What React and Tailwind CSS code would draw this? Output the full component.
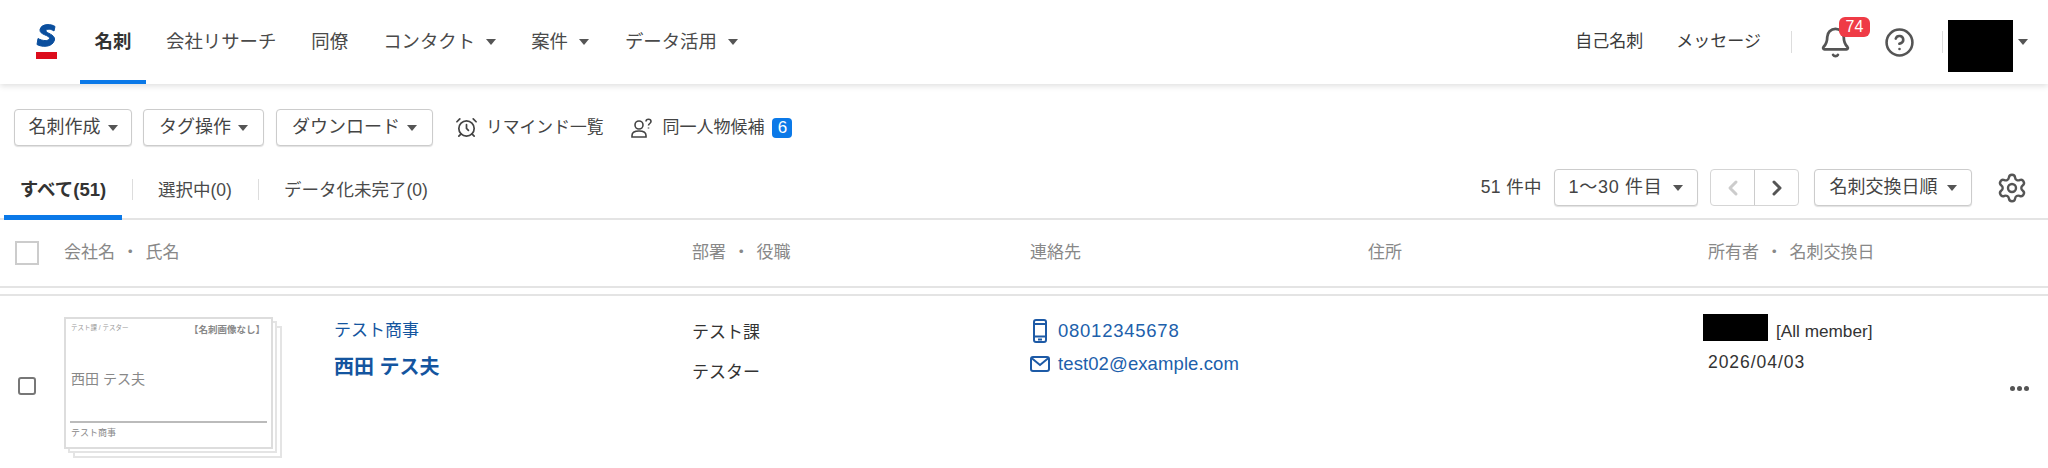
import React from "react";
import { AlarmClock, Bell, ChevronLeft, ChevronRight, CircleHelp, Settings } from "lucide-react";

const Caret = ({ className = "" }) => (
  <span className={`inline-block w-0 h-0 border-l-[5px] border-r-[5px] border-t-[6px] border-l-transparent border-r-transparent border-t-[#555] ${className}`} />
);

const Btn = ({ w, children, gap = "gap-[7px]", text = "text-[18px]" }) => (
  <div className={`h-[37px] ${w} border border-[#ccc] rounded-[4px] shadow-[0_1px_1px_rgba(0,0,0,0.12)] flex items-center justify-center ${gap} ${text} text-[#444] bg-white`}>
    <span>{children}</span>
    <Caret />
  </div>
);

const NavItem = ({ children, ml, caret }) => (
  <div className={`flex items-center ${ml}`}>
    <span>{children}</span>
    {caret && <Caret className="ml-[11px]" />}
  </div>
);

export default function App() {
  return (
    <div className="w-[2048px] h-[468px] overflow-hidden bg-white text-[#333] font-['Liberation_Sans','Noto_Sans_CJK_JP',sans-serif] text-[17.5px]">
      {/* header */}
      <header className="h-[84px] flex items-center shadow-[0_2px_6px_rgba(0,0,0,0.13)] relative">
        <svg width="22" height="38" viewBox="0 0 22 38" className="ml-[36px] shrink-0 -mt-[1px]">
          <path d="M19 3.5C16 1 5.5 0 4 6.5C3 12 14 12 13.5 15.5C13 18.5 6 18 2 15.5L1 21.5C5 24 16.5 25 18.5 17C19.5 11 9.5 10.5 10 7.5C10.5 5.5 15.5 6 18 8Z" fill="#0b4f9e" stroke="#0b4f9e" strokeWidth="1" />
          <rect x="0" y="29" width="21" height="7" fill="#dc0d1c" />
        </svg>
        <nav className="flex items-center text-[18.4px] text-[#4a4a4a] h-full">
          <div className="relative ml-[22px] w-[66px] h-full flex items-center justify-center font-bold text-[#333]">
            名刺
            <span className="absolute left-0 right-0 bottom-0 h-[4px] bg-[#0b79e8]" />
          </div>
          <NavItem ml="ml-[20px]">会社リサーチ</NavItem>
          <NavItem ml="ml-[35px]">同僚</NavItem>
          <NavItem ml="ml-[35px]" caret>コンタクト</NavItem>
          <NavItem ml="ml-[35px]" caret>案件</NavItem>
          <NavItem ml="ml-[36px]" caret>データ活用</NavItem>
        </nav>
        <div className="ml-auto flex items-center text-[17px] text-[#3a3a3a]">
          <span>自己名刺</span>
          <span className="ml-[33px]">メッセージ</span>
          <span className="ml-[30px] w-px h-[22px] bg-[#ddd]" />
          <div className="relative ml-[27px] w-[33px] h-[33px]">
            <Bell size={33} strokeWidth={2} className="text-[#555]" />
            <span className="absolute left-[20px] -top-[9px] w-[31px] h-[20px] rounded-[6px] bg-[#ef3b46] text-white text-[16px] leading-[20px] text-center">74</span>
          </div>
          <CircleHelp size={31} strokeWidth={2} className="ml-[32px] text-[#555]" />
          <span className="ml-[27px] w-px h-[22px] bg-[#ddd]" />
          <span className="ml-[5px] mt-[8px] w-[65px] h-[52px] bg-black" />
          <Caret className="ml-[5px] mr-[20px]" />
        </div>
      </header>

      {/* toolbar */}
      <div className="flex items-center h-[37px] mt-[25px] pl-[14px] text-[#444]">
        <Btn w="w-[118px]">名刺作成</Btn>
        <Btn w="w-[121px] ml-[11px]">タグ操作</Btn>
        <Btn w="w-[157px] ml-[12px]">ダウンロード</Btn>
        <AlarmClock size={23} strokeWidth={1.8} className="ml-[22px] text-[#444]" />
        <span className="ml-[8px] text-[16.8px]">リマインド一覧</span>
        <svg width="22" height="22" viewBox="0 0 22 22" fill="none" stroke="#444" strokeWidth="1.6" className="ml-[28px]">
          <circle cx="8" cy="8" r="4" />
          <path d="M1 20v-1.500c0-3 3-4.500 7-4.500s7 1.500 7 4.500V20Z" />
          <path d="M15 4.500c0-3 5-3 5 0c0 2-2.500 2-2.500 4M17.500 10.500v1" />
        </svg>
        <span className="ml-[9px] text-[17px]">同一人物候補</span>
        <span className="ml-[8px] w-[20px] h-[20px] rounded-[4px] bg-[#0b79e8] text-white text-[17px] leading-[20px] text-center">6</span>
      </div>

      {/* tabs */}
      <div className="flex items-center h-[74px] pt-[11px] border-b-2 border-[#e4e4e4]">
        <div className="relative ml-[4px] w-[118px] h-full pt-[5px] flex items-center justify-center font-bold text-[18.5px] text-[#333]">
          すべて(51)
          <span className="absolute left-0 right-0 -bottom-[2px] h-[5px] bg-[#0b79e8]" />
        </div>
        <span className="ml-[10px] mt-[3px] w-px h-[21px] bg-[#ddd]" />
        <span className="ml-[25px] pt-[5px] text-[17.5px] text-[#4a4a4a]">選択中(0)</span>
        <span className="ml-[26px] mt-[3px] w-px h-[21px] bg-[#ddd]" />
        <span className="ml-[25px] pt-[5px] text-[17.5px] text-[#4a4a4a]">データ化未完了(0)</span>
        <div className="ml-auto flex items-center text-[#444]">
          <span className="text-[17.5px] tracking-[0.4px]">51 件中</span>
          <Btn w="w-[144px] ml-[12px]" gap="gap-[11px]" text="text-[18px] tracking-[0.7px]">1〜30 件目</Btn>
          <div className="ml-[12px] w-[89px] h-[37px] border border-[#d5d5d5] rounded-[4px] flex">
            <div className="flex-1 flex items-center justify-center border-r border-[#ccc]">
              <ChevronLeft size={24} strokeWidth={3} className="text-[#ccc]" />
            </div>
            <div className="flex-1 flex items-center justify-center">
              <ChevronRight size={24} strokeWidth={3} className="text-[#555]" />
            </div>
          </div>
          <Btn w="w-[158px] ml-[15px]" gap="gap-[9px]">名刺交換日順</Btn>
          <Settings size={32} strokeWidth={1.8} className="ml-[24px] mr-[20px] text-[#555]" />
        </div>
      </div>

      {/* table head */}
      <div className="flex items-center h-[68px] border-b-2 border-[#e4e4e4] text-[17px] text-[#888] [word-spacing:2px]">
        <span className="ml-[15px] w-[24px] h-[24px] border-2 border-[#ccc] shrink-0" />
        <span className="ml-[25px] w-[628px] whitespace-pre">会社名 ・ 氏名</span>
        <span className="w-[338px] whitespace-pre">部署 ・ 役職</span>
        <span className="w-[338px]">連絡先</span>
        <span className="w-[340px]">住所</span>
        <span className="whitespace-pre">所有者 ・ 名刺交換日</span>
      </div>

      {/* row */}
      <div className="mt-[6px] border-t-2 border-[#e4e4e4] flex h-[170px] relative">
        <span className="absolute left-[18px] top-[81px] w-[18px] h-[18px] rounded-[3px] border-2 border-[#777] bg-white" />
        <div className="relative ml-[64px] mt-[21px] w-[209px] h-[132px] shrink-0">
          <span className="absolute left-[9px] top-[9px] w-[209px] h-[132px] border-2 border-[#e4e4e4] bg-white" />
          <span className="absolute left-[4px] top-[4px] w-[209px] h-[132px] border-2 border-[#e4e4e4] bg-white" />
          <div className="absolute inset-0 border-2 border-[#ddd] bg-white text-[#777]">
            <span className="absolute left-[5px] top-[3px] text-[6.5px] leading-[12px] text-[#999]">テスト課 / テスター</span>
            <span className="absolute right-[6px] top-[3px] text-[9.5px] leading-[16px] font-bold text-[#888] whitespace-nowrap">【名刺画像なし】</span>
            <span className="absolute left-[5px] top-[50px] text-[14px] leading-[20px] text-[#888]">西田 テス夫</span>
            <span className="absolute left-[4px] right-[4px] top-[102px] h-[2px] bg-[#bbb]" />
            <span className="absolute left-[5px] top-[107px] text-[9px] leading-[14px] text-[#888]">テスト商事</span>
          </div>
        </div>
        <div className="ml-[61px] w-[358px] pt-[23px] text-[#14559f]">
          <div className="text-[17px] leading-[24px]">テスト商事</div>
          <div className="text-[20px] leading-[28px] font-bold mt-[10px]">西田 テス夫</div>
        </div>
        <div className="w-[338px] pt-[25px] text-[#333] text-[17px]">
          <div className="leading-[24px]">テスト課</div>
          <div className="leading-[24px] mt-[16px]">テスター</div>
        </div>
        <div className="w-[660px] pt-[21px] text-[#2060ab] text-[18.5px]">
          <div className="flex items-center h-[28px] tracking-[0.75px]">
            <svg width="16" height="24" viewBox="0 0 16 24" fill="none" stroke="#1d5aa6" strokeWidth="2" className="ml-[2px] mr-[10px]">
              <rect x="2" y="1" width="12" height="22" rx="2" />
              <path d="M2 17.500h12M6 20.500h4" />
              <path d="M2 5h12" />
            </svg>
            08012345678
          </div>
          <div className="flex items-center h-[28px] mt-[5px] tracking-[0.1px]">
            <svg width="20" height="16" viewBox="0 0 20 16" fill="none" stroke="#1d5aa6" strokeWidth="2" className="mr-[8px]">
              <rect x="1" y="1" width="18" height="14" rx="2" />
              <path d="M1.500 2l8.500 7l8.500-7" />
            </svg>
            test02@example.com
          </div>
        </div>
        <div className="pt-[18px] text-[#333] text-[17.5px]">
          <div className="flex items-center ml-[13px] h-[27px]">
            <span className="w-[65px] h-[27px] bg-black" />
            <span className="ml-[8px] pt-[6px] text-[17.2px] leading-[20px]">[All member]</span>
          </div>
          <div className="mt-[9px] ml-[18px] leading-[24px] tracking-[0.95px]">2026/04/03</div>
        </div>
        <div className="absolute left-[2010px] top-[90px] flex gap-[2px]">
          <span className="w-[5px] h-[5px] rounded-full bg-[#555]" />
          <span className="w-[5px] h-[5px] rounded-full bg-[#555]" />
          <span className="w-[5px] h-[5px] rounded-full bg-[#555]" />
        </div>
      </div>
    </div>
  );
}
